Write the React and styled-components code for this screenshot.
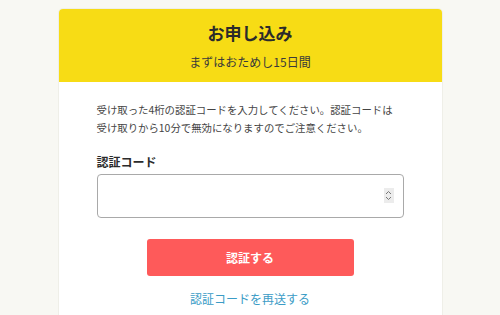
import React from "react";
import styled, { createGlobalStyle } from "styled-components";

const GlobalStyle = createGlobalStyle`
  html, body {
    margin: 0;
    padding: 0;
    background: #f8f8f3;
  }
  body {
    font-family: "Noto Sans CJK JP", "Noto Sans", sans-serif;
    color: #333;
  }
`;

const Page = styled.div`
  display: flex;
  justify-content: center;
  padding-top: 9px;
  height: 306px;
  overflow: hidden;
`;

const Card = styled.div`
  width: 383px;
  background: #ffffff;
  border-radius: 4px 4px 0 0;
  overflow: hidden;
  box-shadow: 0 0 0 1px #efefe8;
`;

const Header = styled.div`
  background: #f7dc15;
  height: 73px;
  display: flex;
  flex-direction: column;
  align-items: center;
  box-sizing: border-box;
  padding-top: 12px;
`;

const Title = styled.h1`
  margin: 0;
  font-size: 17px;
  font-weight: 700;
  line-height: 24px;
  color: #2b2b2b;
`;

const Subtitle = styled.p`
  margin: 8px 0 0;
  font-size: 12px;
  line-height: 18px;
  color: #3a3a3a;
`;

const Body = styled.div`
  padding: 19px 38px 0;
  display: flex;
  flex-direction: column;
`;

const Lead = styled.p`
  margin: 0;
  font-size: 10.4px;
  line-height: 18px;
  white-space: nowrap;
  color: #444;
`;

const Label = styled.label`
  margin-top: 16px;
  font-size: 12px;
  font-weight: 700;
  line-height: 18px;
  color: #2b2b2b;
`;

const Field = styled.div`
  position: relative;
  margin-top: 3px;
`;

const CodeInput = styled.input`
  display: block;
  width: 100%;
  height: 44px;
  box-sizing: border-box;
  border: 1px solid #a9a9a9;
  border-radius: 4px;
  font-size: 13px;
  padding: 0 12px;
  outline: none;
  background: #fff;
  font-family: inherit;
`;

const Spinner = styled.span`
  position: absolute;
  right: 10px;
  top: 14px;
  width: 10px;
  height: 15px;
  background: #ececec;
  display: flex;
  align-items: center;
  justify-content: center;
`;

const Submit = styled.button`
  align-self: center;
  margin-top: 21px;
  width: 207px;
  height: 37px;
  border: none;
  border-radius: 3px;
  background: #fe5a5a;
  color: #fff;
  font-family: inherit;
  font-size: 12px;
  font-weight: 700;
  cursor: pointer;
`;

const Resend = styled.a`
  align-self: center;
  margin-top: 14px;
  font-size: 12px;
  line-height: 18px;
  color: #3b9cc6;
  text-decoration: none;
  cursor: pointer;
`;

const App = () => {
  return (
    <>
      <GlobalStyle />
      <Page>
        <Card>
          <Header>
            <Title>お申し込み</Title>
            <Subtitle>まずはおためし15日間</Subtitle>
          </Header>
          <Body>
            <Lead>
              受け取った4桁の認証コードを入力してください。認証コードは
              <br />
              受け取りから10分で無効になりますのでご注意ください。
            </Lead>
            <Label htmlFor="code">認証コード</Label>
            <Field>
              <CodeInput id="code" type="text" inputMode="numeric" />
              <Spinner>
                <svg width="7" height="11" viewBox="0 0 7 11" fill="none" stroke="#777" strokeWidth="1">
                  <path d="M1 4 L3.5 1.5 L6 4" />
                  <path d="M1 7 L3.5 9.5 L6 7" />
                </svg>
              </Spinner>
            </Field>
            <Submit type="button">認証する</Submit>
            <Resend>認証コードを再送する</Resend>
          </Body>
        </Card>
      </Page>
    </>
  );
};

export default App;
